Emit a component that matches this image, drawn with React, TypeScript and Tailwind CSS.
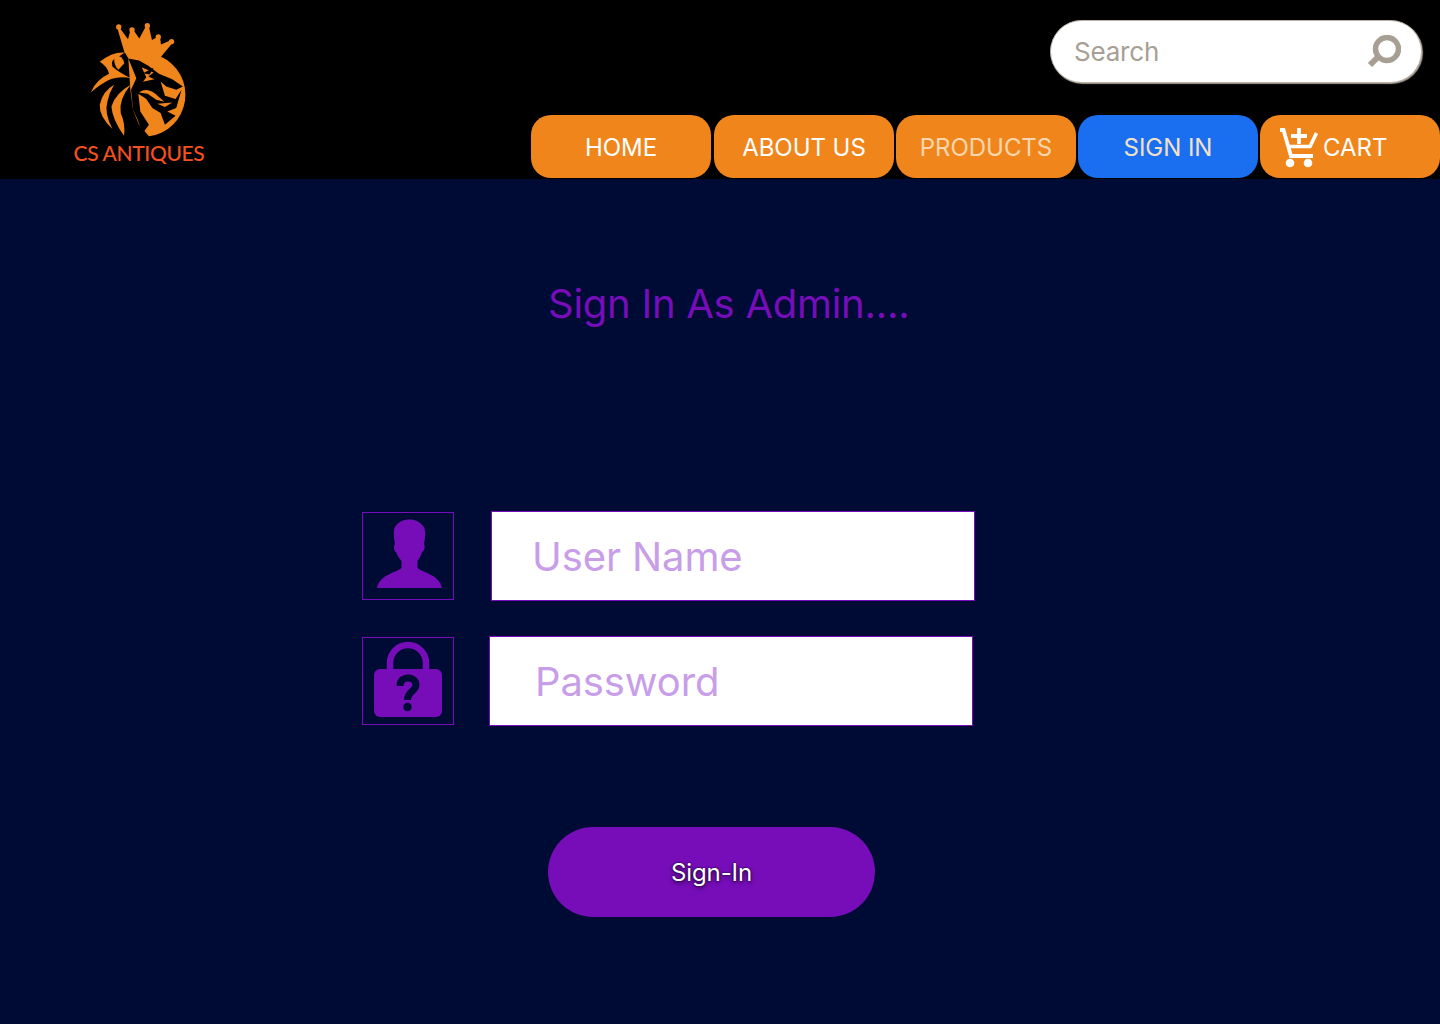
import React from 'react';

const navItems = [
  { label: 'HOME', className: 'bg-[#f0861b] text-white mr-px' },
  { label: 'ABOUT US', className: 'bg-[#f0861b] text-white' },
  { label: 'PRODUCTS', className: 'bg-[#f0861b] text-[#f7d6b0]' },
  { label: 'SIGN IN', className: 'bg-[#1a6ff0] text-[#f3e0c8]' },
];

const Logo: React.FC = () => (
  <div className="flex flex-col items-center w-[160px] ml-[59px] pt-[10px]">
    <svg width="160" height="133" viewBox="0 0 480 400">
      <g fill="#f0861b">
        <circle cx="179" cy="51" r="8" />
        <circle cx="219" cy="60" r="8" />
        <circle cx="265" cy="47" r="8" />
        <circle cx="298" cy="81" r="8" />
        <circle cx="338" cy="95" r="8" />
        <path d="M175 55 L183 55 L207 88 L214 62 L224 62 L241 86 L260 50 L270 50 L279 90 L294 82 L304 86 L306 104 L334 92 L342 98 L305 142 L197 130 Z" />
        <path d="M197 126 Q250 112 305 140 A126 126 0 0 1 270 380 L240 345 L222 300 L214 240 L208 146 Z" />
        <path d="M122 156 Q160 125 197 128 L180 140 Q152 150 160 170 Q175 185 215 205 Q165 195 125 225 Q110 235 95 248 Q110 210 150 192 Q145 170 122 156 Z" />
        <path d="M168 138 Q190 135 196 160 L178 180 Q160 160 168 138 Z" />
        <path d="M165 225 Q130 245 122 285 Q120 320 160 358 Q135 310 145 275 Q150 250 165 225 Z" />
        <path d="M215 225 Q170 250 157 290 Q160 330 195 378 Q200 345 185 310 Q178 270 215 225 Z" />
      </g>
      <path
        fill="#000"
        d="M208 146 L240 152 L268 168 L300 192 L340 208 L372 230 L352 240 L322 230 L305 215 L318 258 L350 268 L368 240 L352 295 L325 305 L350 318 L318 345 L305 310 L280 295 L262 268 L238 252 L244 305 L270 345 L250 372 L236 330 L222 300 L216 240 L232 205 Z"
      />
      <g fill="#f0861b">
        <path d="M248 172 L284 188 L268 200 L286 208 L252 216 L262 202 Z" />
        <path d="M240 248 Q268 228 300 262 L316 276 L292 270 L266 252 Z" />
        <path d="M295 282 L340 278 L318 292 Z" />
      </g>
      <path d="M252 190 L284 174 L272 194 Z" fill="#000" />
    </svg>
    <span className="font-['Lato',sans-serif] font-medium text-[21px] leading-[24px] tracking-[-0.35px] text-[#f4511e] whitespace-nowrap mt-[-2px]">
      CS ANTIQUES
    </span>
  </div>
);

const SearchIcon: React.FC = () => (
  <svg width="34" height="34" viewBox="0 0 34 34" fill="none" className="shrink-0">
    <circle cx="20" cy="14" r="11.500" stroke="#a89f94" strokeWidth="5.500" />
    <path d="M10.500 22.500 L3 30" stroke="#a89f94" strokeWidth="6" />
  </svg>
);

const CartIcon: React.FC = () => (
  <svg width="38" height="40" viewBox="0 0 38 40" fill="none" className="shrink-0">
    <path d="M0 2 H3.500 L11 28 H33" stroke="#fff" strokeWidth="3.800" />
    <path d="M7 18.500 H30 L36.500 5" stroke="#fff" strokeWidth="3.600" />
    <path d="M19 0 V16 M11 8 H27" stroke="#fff" strokeWidth="3.800" />
    <circle cx="10" cy="35" r="4.300" fill="#fff" />
    <circle cx="28" cy="35" r="4.300" fill="#fff" />
  </svg>
);

const UserIcon: React.FC = () => (
  <svg width="65" height="69" viewBox="0 0 65 69" fill="#760db9">
    <path d="M31 0.500 C38 0 43 3 45 6 C48 8 48.500 13 48 17 C48 20 47.500 22 47 25 C48.500 27 47.500 32 45 33 C44 37 42 40 40.500 42 L40.500 49 C46 54 62 55 65 69 L0 69 C3 55 19 54 24.500 49 L24.500 42 C22 39 20 36 19 33 C17 32 16 27 18 25 C17 21 16.500 15 17 11 C18 5 24 1 31 0.500 Z" />
  </svg>
);

const LockIcon: React.FC = () => (
  <svg width="68" height="77" viewBox="0 0 68 77">
    <path d="M16 30 V22 A18 18 0 0 1 52 22 V30" fill="none" stroke="#760db9" strokeWidth="6.500" />
    <rect x="0" y="28" width="68" height="48" rx="6" fill="#760db9" />
    <path d="M26 45 C26 39 30 37 34 37 C39 37 42 40 42 44 C42 50 33.500 50 33.500 59" fill="none" stroke="#000b35" strokeWidth="7" />
    <circle cx="33.500" cy="66" r="4.200" fill="#000b35" />
  </svg>
);

const App: React.FC = () => {
  return (
    <div className="min-h-[1024px] bg-[#000b35] font-['Inter',sans-serif]">
      <header className="h-[179px] bg-black flex justify-between">
        <Logo />
        <div className="flex flex-col items-end">
          <div className="mt-5 mr-[18px] w-[372px] h-[63px] rounded-full bg-white border border-[#b9b1a8] shadow-[1px_1px_1px_#a89f94] flex items-center pl-[23px] pr-[20px]">
            <input
              placeholder="Search"
              className="flex-1 min-w-0 outline-none text-[26px] tracking-[-0.2px] bg-transparent text-[#a89f94] placeholder:text-[#a89f94]"
            />
            <SearchIcon />
          </div>
          <nav className="mt-auto mb-px flex gap-[2px] text-[24px] tracking-[-0.05px]">
            {navItems.map((item) => (
              <a key={item.label} className={`w-[180px] h-[63px] pt-[2px] rounded-[20px] flex items-center justify-center ${item.className}`}>
                {item.label}
              </a>
            ))}
            <a className="w-[180px] h-[63px] pt-[2px] rounded-[20px] bg-[#f0861b] text-white flex items-center gap-[5px] pl-5">
              <CartIcon />
              CART
            </a>
          </nav>
        </div>
      </header>

      <main className="flex flex-col">
        <h1 className="mt-[98px] ml-[548px] text-[40px] leading-[54px] tracking-[-0.27px] text-[#760db9]">Sign In As Admin....</h1>

        <div className="mt-[180px] flex items-center ml-[362px]">
          <div className="w-[92px] h-[88px] border border-[#760db9] flex items-end justify-center pb-[11px] pl-[3px]">
            <UserIcon />
          </div>
          <input
            placeholder="User Name"
            className="ml-[37px] w-[484px] h-[90px] bg-white border border-[#760db9] pl-[40px] text-[40px] tracking-[-0.1px] outline-none placeholder:text-[#c89ee8]"
          />
        </div>

        <div className="mt-[35px] flex items-center ml-[362px]">
          <div className="w-[92px] h-[88px] border border-[#760db9] flex items-end justify-center pb-[6px]">
            <LockIcon />
          </div>
          <input
            placeholder="Password"
            className="ml-[35px] w-[484px] h-[90px] bg-white border border-[#760db9] pl-[45px] text-[40px] tracking-[-0.1px] outline-none placeholder:text-[#c89ee8]"
          />
        </div>

        <button className="mt-[101px] ml-[548px] w-[327px] h-[90px] pt-[2px] rounded-[45px] bg-[#760db9] text-white text-[24px] tracking-[-0.1px] [text-shadow:0_0_2px_#000,0_2px_4px_rgba(0,0,0,0.6)]">
          Sign-In
        </button>
      </main>
    </div>
  );
};

export default App;
